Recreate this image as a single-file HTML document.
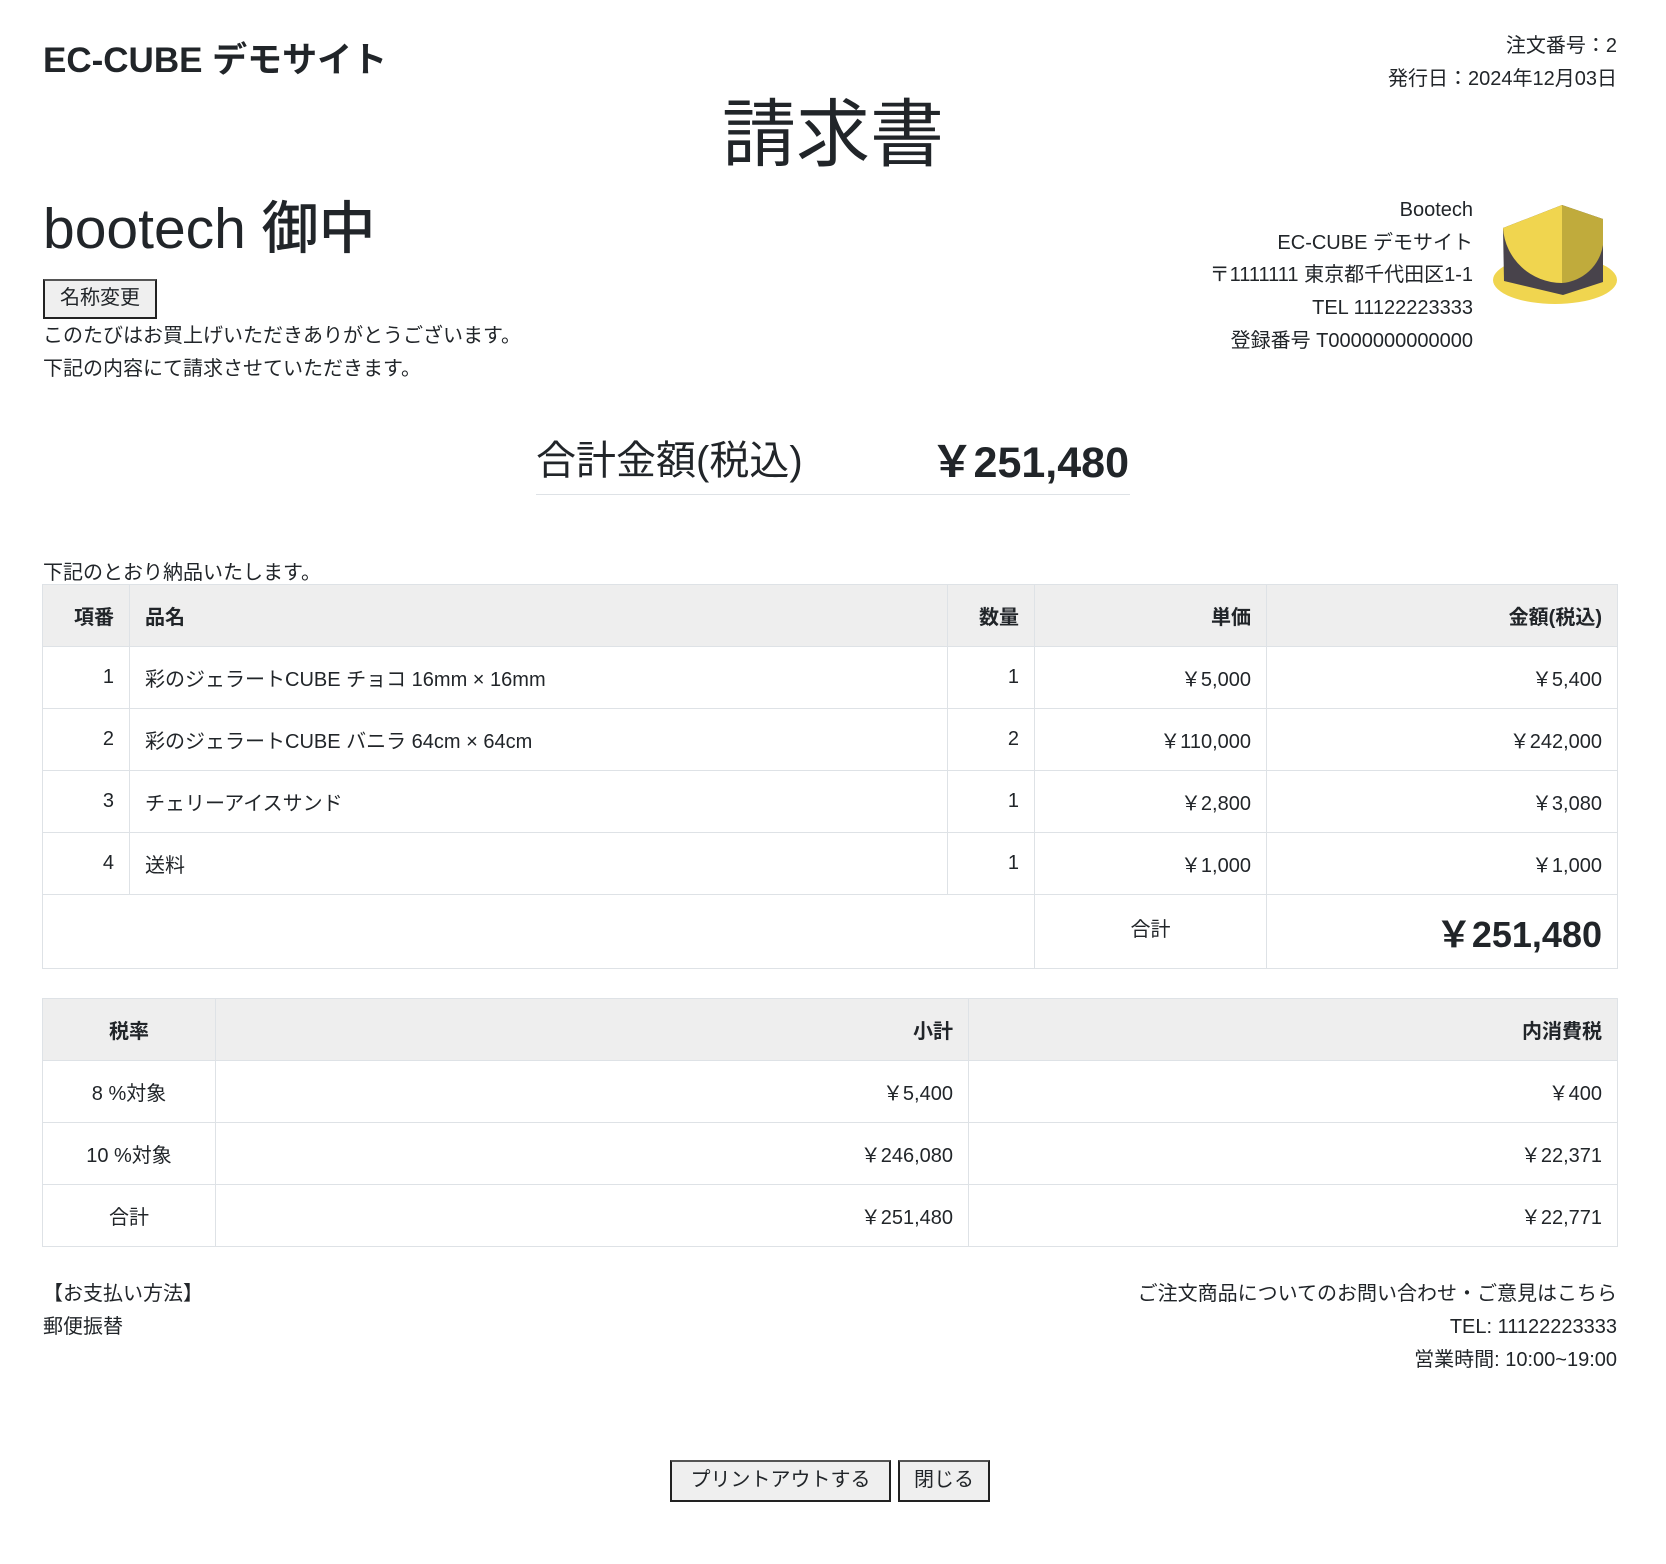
<!DOCTYPE html>
<html><head><meta charset="utf-8"><style>
*{margin:0;padding:0;box-sizing:border-box}
body{width:1666px;height:1564px;background:#fff;color:#212529;font-family:"Liberation Sans","Noto Sans CJK JP",sans-serif;font-size:20px;position:relative;overflow:hidden}
.a{position:absolute;white-space:nowrap}
.r{text-align:right}
table{position:absolute;border-collapse:collapse;table-layout:fixed}
td,th{border:1px solid #dee2e6;padding:0 15px;font-size:20px;font-weight:normal}
th{background:#eee;font-weight:bold}
.btn{position:absolute;background:#efefef;border:2px solid #222;border-top-color:#555;font-size:20px;text-align:center;font-family:"Liberation Sans","Noto Sans CJK JP",sans-serif}
</style></head><body>
<div class="a" style="left:43px;top:32px;font-size:35px;font-weight:bold">EC-CUBE デモサイト</div>
<div class="a r" style="right:49px;top:30px;line-height:33px">注文番号：2<br>発行日：2024年12月03日</div>
<div class="a" style="left:0;width:1666px;text-align:center;top:88px;font-size:74px;line-height:94px">請求書</div>
<div class="a" style="left:43px;top:194px;font-size:57px;font-weight:500;line-height:70px">bootech 御中</div>
<div class="btn" style="left:43px;top:279px;width:114px;height:40px;line-height:34px;background:#efefef">名称変更</div>
<div class="a" style="left:43px;top:320px;line-height:33px">このたびはお買上げいただきありがとうございます。<br>下記の内容にて請求させていただきます。</div>
<div class="a r" style="right:193px;top:194px;line-height:32.7px">Bootech<br>EC-CUBE デモサイト<br>〒1111111 東京都千代田区1-1<br>TEL 11122223333<br>登録番号 T0000000000000</div>
<svg class="a" style="left:1493px;top:205px" width="130" height="105" viewBox="0 0 130 105">
<ellipse cx="62" cy="75" rx="62" ry="24" fill="#f0d54f"/>
<polygon points="10,23 69,0 110,14 110,77 70,90 11,76" fill="#48434b"/>
<path d="M10,23 L69,0 L69,78 A59,59 0 0 1 10,23Z" fill="#f0d54f"/>
<path d="M69,0 L110,14 L110,40 A45,45 0 0 1 69,78Z" fill="#c0ab3c"/>
</svg>
<div class="a" style="left:536px;top:428px;font-size:40px">合計金額(税込)</div>
<div class="a r" style="right:537px;top:428px;font-size:43px;font-weight:bold">￥251,480</div>
<div class="a" style="left:536px;top:494px;width:594px;height:1px;background:#dee2e6"></div>
<div class="a" style="left:43px;top:556px">下記のとおり納品いたします。</div>
<table style="left:42px;top:584px;width:1575px">
<colgroup><col style="width:87px"><col style="width:818px"><col style="width:87px"><col style="width:232px"><col style="width:351px"></colgroup>
<tr style="height:62px"><th class="r">項番</th><th style="text-align:left">品名</th><th class="r">数量</th><th class="r">単価</th><th class="r">金額(税込)</th></tr>
<tr style="height:62px"><td class="r">1</td><td>彩のジェラートCUBE チョコ 16mm × 16mm</td><td class="r">1</td><td class="r">￥5,000</td><td class="r">￥5,400</td></tr>
<tr style="height:62px"><td class="r">2</td><td>彩のジェラートCUBE バニラ 64cm × 64cm</td><td class="r">2</td><td class="r">￥110,000</td><td class="r">￥242,000</td></tr>
<tr style="height:62px"><td class="r">3</td><td>チェリーアイスサンド</td><td class="r">1</td><td class="r">￥2,800</td><td class="r">￥3,080</td></tr>
<tr style="height:62px"><td class="r">4</td><td>送料</td><td class="r">1</td><td class="r">￥1,000</td><td class="r">￥1,000</td></tr>
<tr style="height:74px"><td colspan="3" style="border-right:1px solid #dee2e6"></td><td style="text-align:center;vertical-align:top;padding-top:18px">合計</td><td class="r" style="font-size:36px;font-weight:bold">￥251,480</td></tr>
</table>
<table style="left:42px;top:998px;width:1575px">
<colgroup><col style="width:173px"><col style="width:753px"><col style="width:649px"></colgroup>
<tr style="height:62px"><th>税率</th><th class="r">小計</th><th class="r">内消費税</th></tr>
<tr style="height:62px"><td style="text-align:center">8 %対象</td><td class="r">￥5,400</td><td class="r">￥400</td></tr>
<tr style="height:62px"><td style="text-align:center">10 %対象</td><td class="r">￥246,080</td><td class="r">￥22,371</td></tr>
<tr style="height:62px"><td style="text-align:center">合計</td><td class="r">￥251,480</td><td class="r">￥22,771</td></tr>
</table>
<div class="a" style="left:43px;top:1278px;line-height:33px">【お支払い方法】<br>郵便振替</div>
<div class="a r" style="right:49px;top:1278px;line-height:33px">ご注文商品についてのお問い合わせ・ご意見はこちら<br>TEL: 11122223333<br>営業時間: 10:00~19:00</div>
<div class="btn" style="left:670px;top:1460px;width:221px;height:42px;line-height:36px">プリントアウトする</div>
<div class="btn" style="left:898px;top:1460px;width:92px;height:42px;line-height:36px">閉じる</div>
</body></html>
